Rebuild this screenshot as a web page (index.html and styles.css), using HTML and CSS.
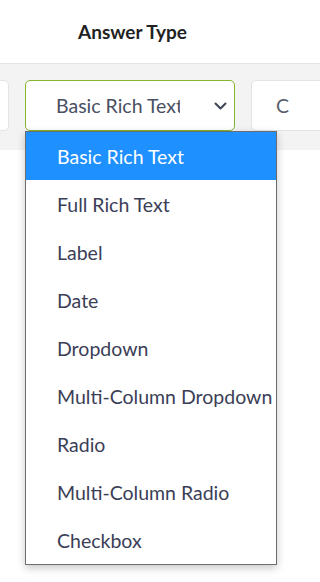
FILE: index.html
```html
<!DOCTYPE html>
<html lang="en">
<head>
<meta charset="utf-8">
<title>Answer Type</title>
<link rel="stylesheet" href="styles.css">
</head>
<body>
<div class="page">
  <div class="row head">
    <div class="cell"></div>
    <div class="cell title">Answer Type</div>
    <div class="cell"></div>
  </div>
  <div class="row filters">
    <div class="cell left"><div class="input"></div></div>
    <div class="cell mid">
      <div class="select">
        <span class="select-text">Basic Rich Text</span>
        <svg class="chev" width="13" height="8" viewBox="0 0 13 8"><polyline points="1.5,1.5 6.5,6.5 11.5,1.5" fill="none" stroke="#3d4352" stroke-width="2" stroke-linecap="round" stroke-linejoin="round"/></svg>
      </div>
      <ul class="menu">
        <li class="item active">Basic Rich Text</li>
        <li class="item">Full Rich Text</li>
        <li class="item">Label</li>
        <li class="item">Date</li>
        <li class="item">Dropdown</li>
        <li class="item">Multi-Column Dropdown</li>
        <li class="item">Radio</li>
        <li class="item">Multi-Column Radio</li>
        <li class="item">Checkbox</li>
      </ul>
    </div>
    <div class="cell right"><div class="input"><span class="input-text">C</span></div></div>
  </div>
</div>
</body>
</html>
```
FILE: styles.css
```css
html, body {
  margin: 0;
  padding: 0;
  background: #ffffff;
}
body {
  font-family: "Lato", "Noto Sans", sans-serif;
  overflow: hidden;
}
.page {
  width: 100%;
  height: 582px;
  overflow: hidden;
  position: relative;
}
.row {
  display: grid;
  grid-template-columns: 17px 226px 1fr;
}
.head {
  height: 63px;
  border-bottom: 1px solid #e3e3e3;
}
.title {
  display: flex;
  align-items: center;
  justify-content: center;
  font-weight: 700;
  font-size: 19px;
  color: #222222;
  padding-left: 5px;
}
.filters {
  background: #f3f3f3;
  padding: 16px 0 19px;
}
.cell {
  min-width: 0;
}
.left {
  display: flex;
  justify-content: flex-end;
  padding-right: 8px;
}
.mid {
  padding: 0 8px;
  position: relative;
}
.right {
  padding-left: 8px;
  overflow: hidden;
}
.input {
  width: 180px;
  height: 51px;
  box-sizing: border-box;
  flex-shrink: 0;
  background: #ffffff;
  border: 1px solid #dfe4e7;
  border-radius: 5px;
  display: flex;
  align-items: center;
}
.input-text {
  padding-left: 24px;
  font-size: 19.5px;
  color: #5a5f6b;
}
.select {
  height: 51px;
  box-sizing: border-box;
  background: #ffffff;
  border: 1px solid #84b52c;
  border-radius: 5px;
  display: flex;
  align-items: center;
  padding: 0 7px 0 30px;
}
.select-text {
  width: 124px;
  flex-shrink: 0;
  overflow: hidden;
  white-space: nowrap;
  font-size: 19.5px;
  color: #4a4f62;
}
.chev {
  margin-left: 34px;
  display: block;
}
.menu {
  position: absolute;
  left: 8px;
  top: 51px;
  width: 252px;
  box-sizing: border-box;
  margin: 0;
  padding: 0;
  list-style: none;
  background: #ffffff;
  border: 1px solid #6e6e6e;
  box-shadow: 0 3px 8px rgba(0, 0, 0, 0.22);
  z-index: 2;
}
.item {
  height: 48px;
  display: flex;
  align-items: center;
  padding-left: 31px;
  font-size: 19.5px;
  color: #3b3e57;
  white-space: nowrap;
}
.item.active {
  background: #1e90ff;
  color: #ffffff;
}
```
